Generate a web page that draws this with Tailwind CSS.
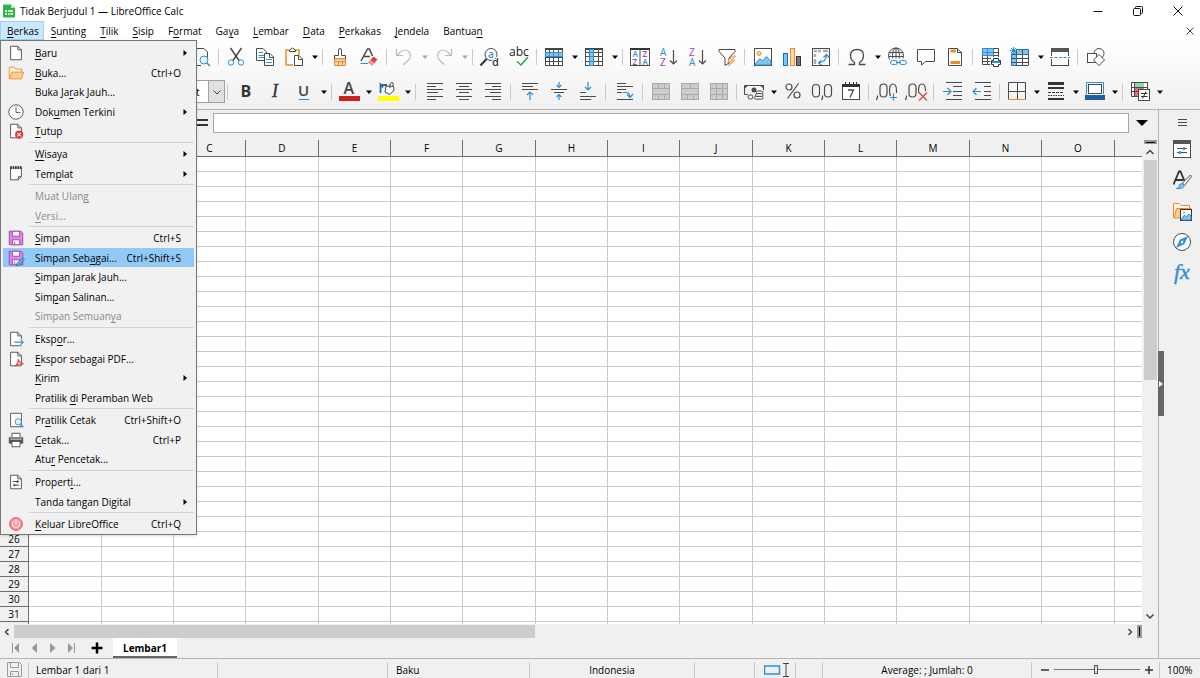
<!DOCTYPE html>
<html lang="id">
<head>
<meta charset="utf-8">
<title>Tidak Berjudul 1 — LibreOffice Calc</title>
<script src="https://cdn.jsdelivr.net/npm/@tailwindcss/browser@4"></script>
</head>
<body class="relative flex h-screen flex-col overflow-hidden bg-white font-['Open_Sans','Noto_Sans',sans-serif] text-[10px] leading-4 text-black">

<header class="bg-white">
  <div class="flex h-[21px] items-center pl-0.5">
    <svg class="mr-1 size-[14px]" viewBox="0 0 14 14"><path d="M1 1.500Q1 .5 2 .5H9L13 4V12.500Q13 13.500 12 13.500H2Q1 13.500 1 12.500Z" fill="#2fb344"/><path d="M9 .5V4H13Z" fill="#b6ecb9"/><rect x="3" y="6" width="8" height="5" rx="1" fill="#e4f8e5"/><path d="M3 8.500H11M5.500 6V11M8 8V11" stroke="#2fb344"/></svg>
    <h1 class="flex-1">Tidak Berjudul 1 — LibreOffice Calc</h1>
    <button type="button" aria-label="Kecilkan" class="flex w-10 justify-center"><svg class="size-3" viewBox="0 0 12 12"><path d="M1.500 6.500H10.500" stroke="#111"/></svg></button>
    <button type="button" aria-label="Pulihkan" class="flex w-10 justify-center"><svg class="size-3" viewBox="0 0 12 12" fill="none" stroke="#111"><rect x="1.500" y="3.500" width="7" height="7" rx="1"/><path d="M3.500 3.500V2.500Q3.500 1.500 4.500 1.500H9.500Q10.500 1.500 10.500 2.500V7.500Q10.500 8.500 9.500 8.500H8.500"/></svg></button>
    <button type="button" aria-label="Tutup jendela" class="mr-0.5 flex w-10 justify-center"><svg class="size-3" viewBox="0 0 12 12"><path d="M1.500 1.500L10.500 10.500M10.500 1.500L1.500 10.500" stroke="#111"/></svg></button>
  </div>
  <nav id="menubar" class="flex h-[19px] items-stretch pr-1" aria-label="Menu utama"></nav>
</header>

<div class="flex h-[70px] flex-col border-b border-[#b4b4b4] bg-linear-to-b from-white to-[#f0f0f0] pl-[187px]">
  <div id="bar1" class="flex h-[35px] items-center" role="toolbar" aria-label="Standar"></div>
  <div class="flex h-[35px] items-center">
    <div class="flex h-[23px] w-[38px] border border-[#a0a0a0] bg-white">
      <select aria-label="Ukuran fonta" class="min-w-0 flex-1 appearance-none bg-white pl-0.5 outline-none"><option>pt</option></select>
      <span class="flex w-4 items-center justify-center border-l border-[#a0a0a0] bg-[#e1e1e1]"><svg class="size-2" viewBox="0 0 8 8"><path d="M0.500 2.500L4 6L7.500 2.500" fill="none" stroke="#444"/></svg></span>
    </div>
    <div id="bar2" class="flex items-center" role="toolbar" aria-label="Pemformatan"></div>
  </div>
</div>

<main class="flex min-h-0 flex-1 bg-[#f0f0f0]">
  <section class="flex min-w-0 flex-1 flex-col">
    <div class="flex h-[30px] shrink-0 items-center pb-1 pl-[197px]">
      <svg class="h-3 w-4 shrink-0" viewBox="0 0 16 12"><path d="M0 3H11M0 8H11" stroke="#333" stroke-width="2"/></svg>
      <input type="text" aria-label="Baris masukan" class="h-5 min-w-0 flex-1 border border-[#a6a6a6] bg-white px-1 outline-none">
      <button type="button" aria-label="Bentangkan bilah rumus" class="flex w-[29px] justify-center pr-1"><svg class="h-2 w-3" viewBox="0 0 12 8"><path d="M0 1H12L6 7Z" fill="#000"/></svg></button>
    </div>
    <div class="flex min-h-0 flex-1">
      <div class="min-w-0 flex-1 overflow-hidden bg-white">
        <table id="grid" class="w-full table-fixed border-separate border-spacing-0"></table>
      </div>
      <div class="ml-0.5 flex w-[14px] flex-col">
        <div class="flex h-1 w-[13px] items-center justify-center bg-[#999]"><span class="h-px w-[9px] bg-black"></span></div>
        <button type="button" aria-label="Gulir naik" class="flex h-4 w-3 items-center justify-center"><svg class="size-2" viewBox="0 0 8 8"><path d="M.5 6L4 2.500L7.500 6" fill="none" stroke="#444" stroke-width="1.500"/></svg></button>
        <div class="flex w-[13px] flex-1 flex-col"><div class="h-[49%] bg-[#cdcdcd]"></div></div>
        <button type="button" aria-label="Gulir turun" class="flex h-4 w-3 items-center justify-center"><svg class="size-2" viewBox="0 0 8 8"><path d="M.5 2.500L4 6L7.500 2.500" fill="none" stroke="#444" stroke-width="1.500"/></svg></button>
      </div>
    </div>
    <div class="flex h-[14px] items-center pt-px pr-4">
      <button type="button" aria-label="Gulir kiri" class="flex w-[14px] justify-center"><svg class="size-2" viewBox="0 0 8 8"><path d="M5.500 1L2.500 4L5.500 7" fill="none" stroke="#444" stroke-width="1.500"/></svg></button>
      <div class="h-[13px] flex-1"><div class="h-[13px] w-[47%] bg-[#cdcdcd]"></div></div>
      <button type="button" aria-label="Gulir kanan" class="flex w-[14px] justify-center"><svg class="size-2" viewBox="0 0 8 8"><path d="M2.500 1L5.500 4L2.500 7" fill="none" stroke="#444" stroke-width="1.500"/></svg></button>
      <div class="flex h-[13px] w-[5px] items-center justify-center bg-[#999]"><span class="h-[9px] w-px bg-black"></span></div>
    </div>
    <div class="flex h-5 items-stretch pl-[5px]">
      <button type="button" aria-label="Lembar pertama" class="flex w-[19px] items-center justify-center"><svg class="h-3 w-2" viewBox="0 0 8 12"><path d="M8 1V11L3 6Z" fill="#999"/><path d="M1.500 1V11" stroke="#999"/></svg></button>
      <button type="button" aria-label="Lembar sebelumnya" class="flex w-[19px] items-center justify-center"><svg class="h-3 w-2" viewBox="0 0 8 12"><path d="M7 1V11L1.500 6Z" fill="#999"/></svg></button>
      <button type="button" aria-label="Lembar berikutnya" class="flex w-[19px] items-center justify-center"><svg class="h-3 w-2" viewBox="0 0 8 12"><path d="M1 1V11L6.500 6Z" fill="#999"/></svg></button>
      <button type="button" aria-label="Lembar terakhir" class="flex w-[19px] items-center justify-center"><svg class="h-3 w-2" viewBox="0 0 8 12"><path d="M0 1V11L5 6Z" fill="#999"/><path d="M6.500 1V11" stroke="#999"/></svg></button>
      <button type="button" aria-label="Tambah lembar" class="flex w-8 items-center justify-center"><svg class="size-3" viewBox="0 0 12 12"><path d="M6 .5V11.500M.5 6H11.500" stroke="#000" stroke-width="2.500"/></svg></button>
      <button type="button" class="w-16 border-b-2 border-[#666] bg-white pt-0.5 font-bold">Lembar1</button>
    </div>
  </section>
  <aside class="relative flex w-[42px] flex-col border-l border-[#b4b4b4] pl-[13px]" aria-label="Bilah sisi">
    <div id="side" class="flex flex-col items-start"></div>
    <button type="button" aria-label="Sembunyikan bilah sisi" class="absolute top-[241px] -left-px flex h-[65px] w-1.5 items-center bg-[#666]"><svg class="h-2 w-1.5" viewBox="0 0 6 8"><path d="M1 1V7L5 4Z" fill="#fff"/></svg></button>
  </aside>
</main>

<footer class="flex h-5 shrink-0 items-center border-t border-[#b4b4b4] bg-[#f0f0f0] pt-0.5">
  <svg class="mr-1.5 ml-[7px] size-[15px] shrink-0" viewBox="0 0 15 15" fill="none" stroke="#9a9a9a"><path d="M.5 .5H12.500L14.500 2.500V14.500H.5Z"/><path d="M3.500 .5V5.500H11.500V.5M3.500 14.500V9.500H11.500V14.500M5.500 11V13"/></svg>
  <div class="h-4 w-[189px] border-l border-[#c8c8c8] pl-[7px]">Lembar 1 dari 1</div>
  <div class="h-4 w-[170px] border-l border-[#c8c8c8]"></div>
  <div class="h-4 w-[142px] border-l border-[#c8c8c8] pl-2">Baku</div>
  <div class="h-4 w-[165px] border-l border-[#c8c8c8] text-center">Indonesia</div>
  <div class="h-4 w-[60px] border-l border-[#c8c8c8]"></div>
  <div class="flex h-4 w-[41px] items-center border-l border-[#c8c8c8] pl-[9px]">
    <svg class="h-[14px] w-7" viewBox="0 0 28 14" fill="none"><rect x=".5" y="3" width="15" height="8" stroke="#2e93d9" stroke-width="1.500"/><path d="M19 .5H25M22 .5V13.500M19 13.500H25" stroke="#444"/></svg>
  </div>
  <div class="h-4 w-[27px] border-l border-[#c8c8c8]"></div>
  <div class="h-4 flex-1 border-l border-[#c8c8c8] text-center">Average: ; Jumlah: 0</div>
  <div class="flex h-4 w-32 items-center border-l border-[#c8c8c8] pl-2">
    <button type="button" aria-label="Perkecil"><svg class="size-[10px]" viewBox="0 0 10 10"><path d="M1 5H9" stroke="#333" stroke-width="1.500"/></svg></button>
    <input type="range" min="0" max="100" value="49" aria-label="Zum" class="mx-1 h-3 w-[86px] appearance-none bg-[linear-gradient(#777,#777)] bg-[length:100%_1px] bg-center bg-no-repeat [&::-webkit-slider-thumb]:h-[9px] [&::-webkit-slider-thumb]:w-1 [&::-webkit-slider-thumb]:appearance-none [&::-webkit-slider-thumb]:border [&::-webkit-slider-thumb]:border-[#555] [&::-webkit-slider-thumb]:bg-[#ddd]">
    <button type="button" aria-label="Perbesar"><svg class="size-[10px]" viewBox="0 0 10 10"><path d="M1 5H9M5 1V9" stroke="#333" stroke-width="1.500"/></svg></button>
  </div>
  <div class="h-4 w-[41px] border-l border-[#c8c8c8] pl-[7px]">100%</div>
</footer>

<div id="menu" role="menu" aria-label="Berkas" class="absolute top-10 left-0 w-[197px] border border-[#777] bg-[#f1f1f1] px-0.5 pt-0.5 shadow-sm"></div>

<script>
const G = '#4a4a4a', B = '#2e8fd6', O = '#ee8a2e';
const page = `<path d="M4 2.500H12L16 6.500V17.500H4Z" fill="#fff" stroke="${G}"/><path d="M12 2.500V6.500H16" fill="none" stroke="${G}"/>`;
const tableGrid = `<rect x="1.500" y="1.500" width="17" height="17" fill="#fff"/>`;
const merge = `<rect x="1.500" y="2.500" width="17" height="16" fill="#ccc" stroke="#aaa"/><path d="M1 7.500H19M1 13.500H19M7.500 2V7M13.500 2V7M7.500 13V18M13.500 13V18" stroke="#aaa"/>`;
const lines = d => `<path d="${d}" stroke="${G}"/>`;
const icons = {
  preview: `<path d="M3.500 1.500H13L16.500 5V12M3.500 1.500V18.500H10" fill="none" stroke="${G}"/><circle cx="13" cy="13" r="4" fill="#eaf5fd" stroke="${B}"/><path d="M16 16L19 19" stroke="${B}" stroke-width="1.500"/>`,
  cut: `<path d="M4.500 1L13 13.500M15.500 1L7 13.500" stroke="${G}" stroke-width="1.500"/><circle cx="5" cy="15.500" r="2.700" fill="none" stroke="${B}"/><circle cx="15" cy="15.500" r="2.700" fill="none" stroke="${B}"/>`,
  copy: `<path d="M1.500 1.500H8L11.500 5V13.500H1.500Z" fill="#fff" stroke="${G}"/><path d="M3.500 5.500H8M3.500 8.500H9M3.500 10.500H9" stroke="${B}"/><path d="M9.500 6.500H15L18.500 10V18.500H9.500Z" fill="#fff" stroke="${G}"/><path d="M14.500 6.500V10.500H18.500" fill="none" stroke="${G}"/><path d="M11 12.500H17M11 15.500H17" stroke="${B}"/>`,
  paste: `<path d="M9 18H2V3H15V8" fill="none" stroke="${O}" stroke-width="1.500"/><path d="M5.500 4.500V3L8.500 1L11.500 3V4.500Z" fill="#fff" stroke="${G}"/><path d="M10.500 8.500H15L18.500 12V18.500H10.500Z" fill="#fff" stroke="${G}"/><path d="M14.500 8.500V12.500H18.500" fill="none" stroke="${G}"/>`,
  brush: `<path d="M8.500 8.500V3Q8.500 1.500 10 1.500T11.500 3V8.500H15.500V12H4.500V8.500Z" fill="#fff" stroke="${G}"/><path d="M4.500 12V18.500H15.500V12Z" fill="#fbd9a8" stroke="${O}"/><path d="M5 14.500H15M8.500 15V18M12.500 15V18" stroke="${O}"/>`,
  clear: `<path d="M2 14L8.500 2H10.500L13.500 9M5 9.500H11" fill="none" stroke="${G}" stroke-width="1.500"/><path d="M1.500 16.500H9" stroke="${B}"/><path d="M9 15.500L14.500 9.500L18.500 12.500L13 18.500Z" fill="#e03c3c"/><path d="M9 15.500L11.500 13L15.500 16L13 18.500Z" fill="#f39b9b"/>`,
  undo: `<path d="M2.500 2V8.500H9M2.500 8.500L7 4.500Q11 1.500 14.500 4.500Q18 8.500 15 12.500L9 18" fill="none" stroke="#bbb" stroke-width="1.200"/>`,
  redo: `<path d="M17.500 2V8.500H11M17.500 8.500L13 4.500Q9 1.500 5.500 4.500Q2 8.500 5 12.500L10 17.500" fill="none" stroke="#bbb" stroke-width="1.200"/>`,
  find: `<circle cx="11" cy="7.500" r="6" fill="#fff" stroke="${G}"/><path d="M6.500 12L.5 18.500" stroke="#333" stroke-width="2"/><text x="8" y="10.500" font-size="10" font-weight="600" fill="${B}">a</text><text x="12" y="19" font-size="11" font-weight="600" fill="#333" stroke="#fff" stroke-width="2" paint-order="stroke">d</text>`,
  spell: `<text x="0" y="9" font-size="12" fill="#222">abc</text><path d="M8 14.500L12 18L19 10" fill="none" stroke="#23a455" stroke-width="1.500"/>`,
  row: `${tableGrid}<path d="M5.500 1.500V18.500M9.500 1.500V18.500M14.500 1.500V18.500M1.500 10.500H18.500M1.500 14.500H18.500" stroke="${G}"/><rect x="1.500" y="1.500" width="17" height="17" fill="none" stroke="${G}"/><path d="M1 2H19" stroke="#444" stroke-width="2"/><rect x="1.500" y="5.500" width="17" height="4" fill="#83c3ef" stroke="${B}"/><path d="M5.500 6V9M9.500 6V9M14.500 6V9" stroke="${B}"/>`,
  col: `${tableGrid}<path d="M14.500 1.500V18.500M1.500 5.500H18.500M1.500 9.500H18.500M1.500 14.500H18.500" stroke="${G}"/><rect x="1.500" y="1.500" width="17" height="17" fill="none" stroke="${G}"/><path d="M1 2H19" stroke="#444" stroke-width="2"/><rect x="5.500" y="2.500" width="4" height="16" fill="#83c3ef" stroke="${B}"/><path d="M6 5.500H9M6 9.500H9M6 14.500H9" stroke="${B}"/>`,
  sort: `<rect x=".5" y="1.500" width="19" height="17" fill="#fff" stroke="${G}"/><path d="M0 2H20" stroke="#333" stroke-width="2"/><path d="M10 2V19" stroke="${G}"/><g font-size="8" font-weight="600"><text x="2.500" y="10" fill="${B}">A</text><text x="2.500" y="17.500" fill="#a93fb8">Z</text><text x="12.500" y="10" fill="#a93fb8">Z</text><text x="12.500" y="17.500" fill="${B}">A</text></g>`,
  asc: `<g font-size="10"><text x="1" y="8.500" fill="${B}">A</text><text x="1" y="18.500" fill="#a93fb8">Z</text></g><path d="M14.500 3V17M11 13.500L14.500 17L18 13.500" fill="none" stroke="${G}" stroke-width="1.200"/>`,
  desc: `<g font-size="10"><text x="1" y="8.500" fill="#a93fb8">Z</text><text x="1" y="18.500" fill="${B}">A</text></g><path d="M14.500 3V17M11 13.500L14.500 17L18 13.500" fill="none" stroke="${G}" stroke-width="1.200"/>`,
  filter: `<path d="M2 2.500H18V4.500L12 11V16L8 18.500V11L2 4.500Z" fill="#fff" stroke="${G}"/><path d="M14.500 9L10.500 15H13.500L11.500 19L17.500 13.500H14.500L18.500 9Z" fill="#fbd9a8" stroke="${O}" stroke-width=".8"/>`,
  image: `<rect x="1.500" y="1.500" width="17" height="17" fill="#fff" stroke="${G}"/><circle cx="6" cy="6.500" r="2" fill="#fbd9a8" stroke="${O}"/><path d="M2 17L7 11.500L9.500 14L13.500 9.500L18 14V18H2Z" fill="#83c3ef" stroke="${B}"/>`,
  chart: `<rect x="1.500" y="6.500" width="4" height="12" fill="#83c3ef" stroke="#1f6fb2"/><rect x="8.500" y="1.500" width="4" height="17" fill="#fbd9a8" stroke="${O}"/><rect x="14.500" y="9.500" width="4" height="9" fill="#777" stroke="#333"/>`,
  pivot: `<rect x="1.500" y="1.500" width="17" height="17" fill="#fff" stroke="${G}"/><path d="M3 4H6M7 4H10M12 4H17M4 7V10M4 12V17" stroke="#aaa" stroke-width="2.500"/><path d="M8 16Q15 15 15.500 8M12.500 10.500L15.500 7.500L18 10.500M10.500 13L7.500 16L10.500 18" fill="none" stroke="${B}" stroke-width="1.200"/>`,
  omega: `<path d="M1.500 17.500H7.500V15.500Q3.500 13 3.500 8.500Q3.500 2.500 10 2.500T16.500 8.500Q16.500 13 12.500 15.500V17.500H18.500" fill="none" stroke="${G}" stroke-width="1.300"/>`,
  link: `<g fill="none"><g stroke="${G}"><circle cx="9" cy="8.500" r="7.500"/><ellipse cx="9" cy="8.500" rx="3.500" ry="7.500"/><path d="M9 1V12M2 5.500H16M1.500 9.500H16.500"/></g><rect x="3" y="11.500" width="17" height="8" fill="#f8f8f8"/><rect x="3.500" y="13.500" width="7" height="4" rx="2" stroke="${B}"/><rect x="12.500" y="13.500" width="7" height="4" rx="2" stroke="${B}"/><path d="M9 15.500H14" stroke="${B}"/></g>`,
  comment: `<path d="M1.500 2.500H18.500V14.500H9.500L5.500 18V14.500H1.500Z" fill="#fff" stroke="${G}"/>`,
  footer: `<path d="M3.500 1.500H12L16.500 5.500V18.500H3.500Z" fill="#fff" stroke="${G}"/><path d="M12.500 1.500V5.500H17" fill="none" stroke="${G}"/><path d="M5.500 4H11M5.500 15.500H15" stroke="${O}" stroke-width="3"/>`,
  printarea: `<rect x="1" y="2" width="12" height="6" fill="#83c3ef"/><path d="M1.500 1.500H17.500V10M1.500 1.500V17.500H9M1 5.500H17.500M1 8.500H17.500M1 11.500H10M1 14.500H9M6.500 2V17.500M12.500 2V10" fill="none" stroke="${G}"/><path d="M1.500 1.500H12.500V8.500H1.500ZM6.500 1.500V8.500M1.500 5.500H12.500" fill="none" stroke="${B}"/><path d="M12.500 11.500H17.500V13.500H19.500V17.500H17.500V19.500H12.500V17.500H10.500V13.500H12.500Z" fill="#fff" stroke="#333"/><path d="M11 15H19" stroke="${B}" stroke-width="2"/>`,
  freeze: `<rect x="2" y="3" width="16" height="16" fill="#fff"/><path d="M2 3H18V7.500H2ZM2 3H6V18H2Z" fill="#83c3ef"/><path d="M6.500 3V18.500M12.500 3V18.500M18.500 3V18.500M2 7.500H18M2 11.500H18M2 15.500H18M2 18.500H18" stroke="${G}"/><path d="M1.500 6.500V18.500H6.500V7.500H18.500V2.500H6" fill="none" stroke="#1f6fb2"/><path d="M3.500 0V7M0 3.500H7M1 1L6 6M6 1L1 6" stroke="${B}"/>`,
  split: `<rect x="1.500" y="1.500" width="17" height="17" fill="#fff" stroke="${G}"/><path d="M1 3H19" stroke="#555" stroke-width="4"/><path d="M0 10.500H20" stroke="#fff" stroke-width="3"/><path d="M0 10.500H20" stroke="${B}" stroke-dasharray="3 1.500"/>`,
  shapes: `<circle cx="13" cy="6.500" r="5" fill="#fff" stroke="${G}"/><rect x="1.500" y="6.500" width="9" height="9" fill="#fff" stroke="${G}"/><path d="M13 7.500L18.500 13L13 18.500L7.500 13Z" fill="#fff" stroke="${G}"/>`,
  bold: `<text x="4.500" y="16" font-size="16" font-weight="700" fill="#333">B</text>`,
  italic: `<text x="7" y="16" font-size="18" font-style="italic" font-family="Liberation Serif" fill="#333" stroke="#333" stroke-width=".3">I</text>`,
  underline: `<text x="4" y="15" font-size="15" font-weight="600" fill="#444">U</text><path d="M5 18.500H15" stroke="${B}"/>`,
  color: `<text x="4.500" y="13" font-size="16" font-weight="600" fill="#444">A</text><rect y="15" width="21" height="5" fill="#c9211e"/>`,
  fill: `<path d="M2.500 12V3.500L5 6.500M2.500 4H9" fill="none" stroke="#1f6fb2" stroke-width="1.800"/><path d="M8 5L15.500 5.500L16 9L12 13.500L7 11Z" fill="#fff" stroke="${G}"/><path d="M12 7V3Q13 .5 15 2V6" fill="none" stroke="${G}"/><rect y="15" width="21" height="5" fill="#ff0"/>`,
  left: lines('M2 2.500H18M2 5.500H11M2 8.500H18M2 11.500H13M2 15.500H18M2 18.500H11'),
  center: lines('M2 2.500H18M5 5.500H15M2 8.500H18M5 11.500H15M2 15.500H18M5 18.500H15'),
  right: lines('M2 2.500H18M9 5.500H18M2 8.500H18M7 11.500H18M2 15.500H18M9 18.500H18'),
  top: lines('M2 2.500H18M2 5.500H13M2 8.500H18') + `<path d="M10 19V11.500M7 14L10 11L13 14" fill="none" stroke="${B}" stroke-width="1.200"/>`,
  middle: lines('M2 8.500H18M5 11.500H15') + `<path d="M10 1V6.500M7.500 4L10 6.500L12.500 4M10 19V13.500M7.500 16L10 13.500L12.500 16" fill="none" stroke="${B}" stroke-width="1.200"/>`,
  bottom: lines('M2 11.500H8M2 15.500H18M2 18.500H13') + `<path d="M10 1V8.500M7 6L10 9L13 6" fill="none" stroke="${B}" stroke-width="1.200"/>`,
  wrap: lines('M2 2.500H11M2 5.500H18M2 8.500H11M2 18.500H18M2 11.500H7') + `<path d="M8 11.500H11Q14.500 11.500 15 16M12 13.500L15 16.500L18 13" fill="none" stroke="${B}" stroke-width="1.200"/>`,
  merge1: merge, merge2: merge.replace('M7.500 2V7M13.500 2V7', 'M10.500 2V7'), merge3: merge + '<path d="M7.500 7V13M13.500 7V13" stroke="#aaa"/>',
  money: `<path d="M4 13.500H.5V4.500H19.500V9" fill="none" stroke="${G}"/><circle cx="10" cy="9" r="2.500" fill="${G}"/><path d="M1 4.500H4L1 7.500M16 4.500H19.500V7.500Z" fill="${G}"/><g fill="#fff" stroke="${G}"><rect x="12.500" y="10" width="6.500" height="2.700" rx="1.200"/><rect x="11.500" y="12.700" width="7.500" height="2.700" rx="1.200"/><rect x="10.500" y="15.400" width="8.500" height="2.700" rx="1.200"/><rect x="4" y="14" width="5" height="4" rx="2"/></g>`,
  percent: `<g fill="none" stroke="${G}" stroke-width="1.200"><circle cx="6" cy="6" r="3"/><circle cx="14" cy="14" r="3"/><path d="M15.500 2.500L4.500 17.500"/></g>`,
  number: `<g fill="none" stroke="${G}" stroke-width="1.200"><rect x=".5" y="3.500" width="7" height="12.500" rx="3.500"/><rect x="12.500" y="3.500" width="7" height="12.500" rx="3.500"/><path d="M10.500 14.500V17L9.500 19"/></g>`,
  date: `<rect x="1.500" y="3.500" width="17" height="15" fill="#fff" stroke="${G}"/><path d="M1 4.500H19" stroke="#333" stroke-width="3"/><path d="M4.500 1V4M8.500 1V4M12.500 1V4M15.500 1V4" stroke="#333"/><path d="M7 9H12.500L9 16.500" fill="none" stroke="${G}" stroke-width="1.300"/>`,
  adddec: `<g fill="none" stroke="${G}" stroke-width="1.200"><rect x="3" y="3" width="7" height="13" rx="3.500"/><path d="M13.500 15Q12.500 13 12.500 9.500Q12.500 3 16 3T19.500 9.500V12M.5 14.500V16L-.5 19"/></g><path d="M16.500 12.500V19.500M13 16.500H20" stroke="${B}" stroke-width="1.200"/>`,
  deldec: `<g fill="none" stroke="${G}" stroke-width="1.200"><rect x="3" y="3" width="7" height="13" rx="3.500"/><path d="M13 12Q12.500 11 12.500 9.500Q12.500 3 16 3T19.500 9.500V10M.5 14.500V16L-.5 19"/></g><path d="M13 11.500L21 19.500M21 11.500L13 19.500" stroke="#e03c3c" stroke-width="1.200"/>`,
  indent: lines('M3 1.500H19M10 5.500H19M10 10.500H19M10 14.500H19M3 18.500H19') + `<path d="M0 10.500H7.500M4.500 7L8 10.500L4.500 14" fill="none" stroke="${B}" stroke-width="1.200"/>`,
  outdent: lines('M3 1.500H19M12 5.500H19M12 10.500H19M12 14.500H19M3 18.500H19') + `<path d="M9 10.500H1M4.500 7L1 10.500L4.500 14" fill="none" stroke="${B}" stroke-width="1.200"/>`,
  borders: `<path d="M1.500 18V1.500H18.500V18M10.500 1.500V18M1.500 10.500H18.500" fill="none" stroke="${G}"/><path d="M1 18.500H19" stroke="${O}"/>`,
  lstyle: `<path d="M2 2.500H18" stroke="#333" stroke-width="3"/><path d="M2 7H18" stroke="#333" stroke-width="2"/><path d="M2 11.500H18" stroke="#333" stroke-dasharray="3 1"/><path d="M2 14.500H18" stroke="#333" stroke-dasharray="1.500 1"/><path d="M2 18H18" stroke="#333" stroke-width="2"/>`,
  lcolor: `<path d="M1.500 13.500V1.500H18.500V13.500" fill="none" stroke="${B}"/><rect x="3.500" y="3.500" width="13" height="9" fill="#fff" stroke="${G}"/><path d="M0 14H20V19H0Z" fill="#1f5fa8"/>`,
  cond: `<path d="M1 1H18V10H1Z" fill="#fff"/><path d="M5 2H14V6H5Z" fill="#8fd9a0"/><path d="M5 7H14V10H5ZM5 11H9V15H5Z" fill="#ee6b73"/><path d="M1.500 1.500V15.500H9M4.500 1.500V15.500M17.500 1.500V9M1 1.500H18M1 6.500H18M1 10.500H9" fill="none" stroke="${G}"/><rect x="8.500" y="8.500" width="11" height="11" fill="#fff" stroke="${G}"/><path d="M11 12.500H17.500M11 15.500H17.500M16 10.500L12.500 17.500" stroke="#333"/>`,
  burger: `<path d="M6 6.500H15M6 9.500H15M6 12.500H15" stroke="${G}"/>`,
  props: `<rect x="1.500" y="1.500" width="17" height="17" fill="#fff" stroke="${G}"/><path d="M1 3H19" stroke="#555" stroke-width="4"/><path d="M5 9.500H15M5 13.500H15" stroke="${G}"/><circle cx="12" cy="9.500" r="1.500" fill="${B}"/><circle cx="8" cy="13.500" r="1.500" fill="${B}"/>`,
  styles: `<path d="M1.500 14.500L7 1.500H8.500L12.500 11M3.500 10H11" fill="none" stroke="#333" stroke-width="1.800"/><path d="M18.500 5L10.500 13L12.500 15.500L19.500 6.500Z" fill="#fff" stroke="${G}"/><path d="M10 13.500Q6.500 14 7 17Q5.500 18.500 4.500 18.500Q10.500 19.500 12.500 15.500Z" fill="#83c3ef" stroke="${B}"/>`,
  gallery: `<path d="M1.500 16.500V2.500H7L9 4.500H17.500V8" fill="#fff4e6" stroke="${O}"/><path d="M2 17L4.500 7.500H19V17Z" fill="#fbd08e" stroke="${O}"/><rect x="8.500" y="8.500" width="11" height="11" fill="#fff" stroke="#333"/><path d="M9.500 18L12.500 14L14.500 16L17 13L19 15V19H9.500Z" fill="#83c3ef" stroke="${B}"/><circle cx="12" cy="11.500" r="1" fill="${O}"/>`,
  compass: `<circle cx="10" cy="10" r="8.500" fill="#fff" stroke="${G}"/><path d="M14 6L11.500 11.500L6 14L8.500 8.500Z" fill="#83c3ef" stroke="${B}" stroke-width="2"/><circle cx="10" cy="10" r="1.200" fill="#fff"/>`,
  fx: `<text x="2" y="16" font-size="22" font-style="italic" font-family="Liberation Serif" fill="${B}" stroke="${B}" stroke-width=".4">fx</text>`,
  new: page,
  open: `<path d="M2.500 16V3.500H8L9.500 5.500H16V9" fill="#fff4e6" stroke="${O}"/><path d="M2.500 16.500L5.500 9H18.500L16 16.500Z" fill="#fbd08e" stroke="${O}"/>`,
  clock: `<circle cx="10" cy="10" r="8" fill="#fff" stroke="${G}"/><path d="M10 4V10.500H15" fill="none" stroke="${G}"/>`,
  close: page + `<circle cx="13.500" cy="14" r="4.500" fill="#e8323c"/><path d="M11.500 12L15.500 16M15.500 12L11.500 16" stroke="#fff" stroke-width="1.200"/>`,
  template: `<path d="M4 3V16.500H12.500L16 13V3" fill="#fff" stroke="${G}"/><path d="M12.500 16.500V13H16" fill="none" stroke="${G}"/><path d="M3.500 3H16.500" stroke="#333" stroke-width="3" stroke-dasharray="2 .700"/>`,
  save: `<path d="M2.500 2.500H15.500L17.500 4.500V17.500H2.500Z" fill="#d88be0" stroke="#a43bb0"/><path d="M6 2.500H14V8H6ZM6 12H14V17.500H6Z" fill="#fff" stroke="#a43bb0"/><path d="M8.500 14V17" stroke="#a43bb0"/>`,
  exp: page + `<path d="M8 13.500H17.500M14.500 10.500L17.500 13.500L14.500 16.500" fill="none" stroke="#fff" stroke-width="3"/><path d="M8 13.500H18M15 10.500L18 13.500L15 16.500" fill="none" stroke="${B}" stroke-width="1.200"/>`,
  pdf: page + `<path d="M9 18Q13 15 12.500 10Q13.500 15 18.500 15.500Q14 14.500 9 18Z" fill="#fff" stroke="#e03c3c" stroke-width="1.300"/>`,
  pview: `<path d="M4 2.500H16V17.500H4Z" fill="#fff" stroke="${G}"/><circle cx="12.500" cy="12" r="3.500" fill="#e6f3fc" stroke="${B}"/><path d="M15 15L18 18" stroke="${B}" stroke-width="1.500"/>`,
  print: `<path d="M5.500 7V2.500H14.500V7" fill="#fff" stroke="${G}"/><path d="M2 7H18V14H2Z" fill="#555"/><path d="M3.500 9H16.500" stroke="#eee"/><path d="M5.500 11.500H14.500V17.500H5.500Z" fill="#fff" stroke="${G}"/>`,
  docprops: page + `<path d="M6.500 9.500H13.500M11.500 8V11M6.500 13.500H13.500M8.500 12V15" stroke="#333"/>`,
  quit: `<circle cx="10" cy="10" r="7" fill="#f79a9f" stroke="#e8323c"/><path d="M10 5V10.500" stroke="#fff" stroke-width="1.500"/><path d="M7 7Q5.500 9 6.500 12Q10 15.500 13.500 12Q14.500 9 13 7" fill="none" stroke="#fff"/>`
};
icons.saveas = icons.save + `<path d="M17.500 9.500L19.500 11.500L13 18.500H10.500V16.500Z" fill="#5aa9e0" stroke="#1f6fb2" stroke-width=".8"/>`;
const svg = (n, c) => `<svg class="${c}" viewBox="0 0 20 20" fill="none">${icons[n]}</svg>`;

const seps = {6: 'h-4 w-1.5 shrink-0 pl-0.5', 7: 'h-4 w-[7px] shrink-0 pl-0.5', 8: 'h-4 w-2 shrink-0 pl-0.5'};
const arrow = (w, dim) => `<button type="button" aria-label="Pilihan lain" class="${w} flex h-6 shrink-0 items-center justify-center"><svg class="size-1.5 shrink-0" viewBox="0 0 6 6"><path d="M0 1.500H6L3 5Z" fill="${dim ? '#aaa' : '#000'}"/></svg></button>`;
const bar = (id, w, spec) => {
  document.getElementById(id).innerHTML = spec.split(' ').map(t => {
    if (t[0] === '|') return `<div class="${seps[t[1]]}"><div class="h-4 w-px bg-[#c9c9c9]"></div></div>`;
    if (t === 'v') return arrow(w, false);
    if (t === 'x') return arrow(w, true);
    return `<button type="button" aria-label="${t}" class="flex h-[25px] w-[29px] shrink-0 items-start pt-0.5 pl-1">${svg(t, 'size-5 overflow-visible')}</button>`;
  }).join('');
};
bar('bar1', 'w-[11px]', 'preview |6 cut copy paste v |6 brush clear |6 undo x redo x |6 find spell |6 row v col v |6 sort asc desc filter |7 image chart pivot |7 omega v link comment footer |7 printarea freeze v split |7 shapes');
bar('bar2', 'w-2.5', '|7 bold italic underline v |6 color v fill v |8 left center right |8 top middle bottom |8 wrap |7 merge1 merge2 merge3 |6 money v percent number date |7 adddec deldec |8 indent outdent |6 borders v lstyle v lcolor v |6 cond v');

document.getElementById('side').innerHTML = ['burger', 'props', 'styles', 'gallery', 'compass', 'fx'].map((n, i) =>
  `<button type="button" aria-label="${n}" class="${i ? 'flex h-[31px] items-start pt-[5px]' : 'flex h-6 items-start pt-[3px]'}">${svg(n, 'size-5 overflow-visible')}</button>`).join('');

// An underscore marks the access key that follows it.
const key = s => s.replace(/_(.)/, '<u class="underline underline-offset-2">$1</u>');
document.getElementById('menubar').innerHTML = '_Berkas _Sunting _Tilik _Sisip F_ormat Ga_ya _Lembar _Data _Perkakas _Jendela Bantua_n'.split(' ').map((s, i) =>
  `<button type="button" class="${i ? 'px-[7px]' : 'border border-[#99d1ff] bg-[#cce8ff] pr-1 pl-1.5'}">${key(s)}</button>`).join('') +
  `<button type="button" aria-label="Tutup dokumen" class="ml-auto flex w-3 items-center justify-center"><svg class="size-2" viewBox="0 0 8 8"><path d="M.5 .5L7.500 7.500M7.500 .5L.5 7.500" stroke="#444"/></svg></button>`;

const menu = [
  [['new', '_Baru', '>'], ['open', '_Buka...', 'Ctrl+O'], ['', 'Buka Ja_rak Jauh...'], ['clock', 'Dok_umen Terkini', '>'], ['close', '_Tutup']],
  [['', '_Wisaya', '>'], ['template', 'Tem_plat', '>']],
  [['', 'Muat Ulan_g', '', 1], ['', '_Versi...', '', 1]],
  [['save', '_Simpan', 'Ctrl+S'], ['saveas', 'Simpan Seb_agai...', 'Ctrl+Shift+S', 2], ['', '_Simpan Jarak Jauh...'], ['', 'Sim_pan Salinan...'], ['', 'Simpan Semuan_ya', '', 1]],
  [['exp', 'Eksp_or...'], ['pdf', '_Ekspor sebagai PDF...'], ['', '_Kirim', '>'], ['', 'Pratilik _di Peramban Web']],
  [['pview', 'Pr_atilik Cetak', 'Ctrl+Shift+O'], ['print', '_Cetak...', 'Ctrl+P'], ['', 'Atu_r Pencetak...']],
  [['docprops', 'Propert_i...'], ['', 'Tanda tangan Digital', '>']],
  [['quit', '_Keluar LibreOffice', 'Ctrl+Q']]
];
const tones = ['text-black', 'text-[#8a8a8a]', 'bg-[#91c9f7] text-black'];
document.getElementById('menu').innerHTML = menu.map(g => '<div>' + g.map(([ic, label, acc = '', st = 0]) =>
  `<button type="button" role="menuitem" ${st === 1 ? 'disabled' : ''} class="${tones[st]} flex w-full items-center pl-1 text-left odd:h-5 even:h-[19px]">
    <span class="flex w-7 shrink-0">${ic ? svg(ic, 'size-[18px]') : ''}</span>
    <span class="flex-1 whitespace-nowrap">${key(label)}</span>
    ${acc === '>' ? '<svg class="mr-1.5 size-1.5" viewBox="0 0 6 6"><path d="M1.500 0V6L5 3Z" fill="#000"/></svg>' : `<span class="mr-[13px] whitespace-nowrap">${acc}</span>`}
  </button>`).join('') + '</div>').join('<div class="flex h-[3px] items-center pl-[26px]"><div class="h-px flex-1 bg-[#d4d4d4]"></div></div>');

const widths = [29, 73, 72, 72, 73, 72, 72, 73, 72, 72, 73, 72, 72, 73, 72, 73];
let html = '<colgroup>' + widths.map(w => `<col style="width:${w}px">`).join('') + '<col></colgroup><thead><tr>' +
  ['', ...'ABCDEFGHIJKLMNO', ''].map(c => `<th scope="col" class="h-[17px] overflow-hidden border-r border-b border-[#6e6e6e] bg-[#f0f0f0] p-0 pt-px leading-[15px] font-normal last:border-r-0">${c}</th>`).join('') + '</tr></thead><tbody>';
for (let r = 1; r <= 32; r++) {
  html += `<tr><th scope="row" class="h-[15px] border-r border-b border-[#6e6e6e] bg-[#f0f0f0] p-0 pt-px leading-[13px] font-normal">${r}</th>` +
    '<td class="border-r border-b border-[#cbcbcb] p-0"></td>'.repeat(15) + '<td class="border-b border-[#cbcbcb] p-0"></td></tr>';
}
document.getElementById('grid').innerHTML = html + '</tbody>';
</script>
</body>
</html>
